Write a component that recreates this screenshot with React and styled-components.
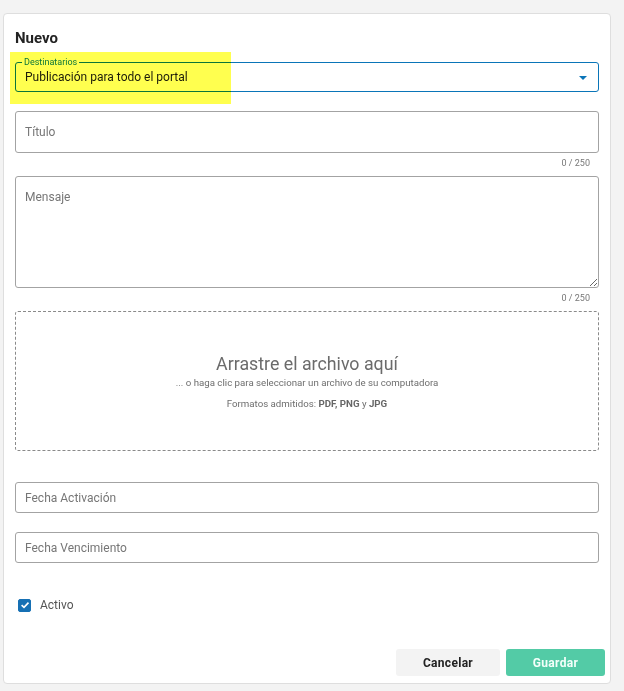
import React, { useState } from "react";
import styled, { createGlobalStyle } from "styled-components";

const GlobalStyle = createGlobalStyle`
  html, body {
    margin: 0;
    padding: 0;
    background: #f3f3f3;
    font-family: Roboto, "Liberation Sans", sans-serif;
  }
  * { box-sizing: border-box; }
`;

const Page = styled.div`
  padding: 13px 13px 8px 3px;
`;

const Card = styled.form`
  position: relative;
  width: 608px;
  background: #fff;
  border: 1px solid #dedede;
  border-radius: 4px;
  padding: 15px 11px 7px 11px;
  display: flex;
  flex-direction: column;
`;

const Title = styled.h2`
  margin: 0 0 15px 0;
  font-size: 15px;
  line-height: 18px;
  font-weight: 700;
  color: #222;
`;

// marcador amarillo sobre el campo de destinatarios
const Highlight = styled.div`
  position: absolute;
  left: 6px;
  top: 38px;
  width: 221px;
  height: 52px;
  background: #ffff4f;
  mix-blend-mode: multiply;
  pointer-events: none;
`;

const SelectBox = styled.div`
  position: relative;
  height: 30px;
  border: 1px solid #0a75b8;
  border-radius: 3px;
  display: flex;
  align-items: center;
  padding: 0 9px;
  font-size: 12px;
  color: #1c1c1c;
  cursor: pointer;
  margin-bottom: 19px;
`;

const FloatLabel = styled.span`
  position: absolute;
  left: 6px;
  top: -6px;
  padding: 0 2px;
  background: #fff;
  font-size: 9px;
  line-height: 10px;
  color: #0a75b8;
`;

const Caret = styled.span`
  margin-left: auto;
  margin-right: 2px;
  width: 0;
  height: 0;
  border-left: 4px solid transparent;
  border-right: 4px solid transparent;
  border-top: 4px solid #0a75b8;
  margin-top: 2px;
`;

const Field = styled.input`
  display: block;
  width: 100%;
  height: ${p => p.$h || 31}px;
  border: 1px solid #a3a3a3;
  border-radius: 3px;
  padding: 0 9px;
  font-family: inherit;
  font-size: 12px;
  color: #222;
  outline: none;
  margin-bottom: ${p => p.$mb || 0}px;
  &::placeholder { color: #767676; }
`;

const Area = styled.textarea`
  display: block;
  width: 100%;
  height: 112px;
  border: 1px solid #a3a3a3;
  border-radius: 3px;
  padding: 13px 9px;
  font-family: inherit;
  font-size: 12px;
  resize: vertical;
  outline: none;
  &::placeholder { color: #767676; }
`;

const Counter = styled.div`
  height: 23px;
  padding: 4px 9px 0 0;
  text-align: right;
  font-size: 9px;
  line-height: 12px;
  color: #777;
`;

const DropZone = styled.div`
  height: 140px;
  border: 1px dashed #8a8a8a;
  border-radius: 3px;
  display: flex;
  flex-direction: column;
  align-items: center;
  justify-content: center;
  color: #6e6e6e;
  cursor: pointer;
  margin-bottom: 31px;
`;

const DropTitle = styled.div`
  font-size: 17.8px;
  line-height: 22px;
  color: #6b6b6b;
`;

const DropHint = styled.div`
  font-size: 9.7px;
  line-height: 12px;
  margin-top: ${p => p.$mt}px;
  color: #6e6e6e;
  b { font-weight: 700; color: #666; }
`;

const CheckRow = styled.label`
  display: flex;
  align-items: center;
  gap: 9px;
  margin: 35px 0 0 3px;
  font-size: 12px;
  color: #555;
  height: 14px;
`;

const CheckBox = styled.span`
  width: 13px;
  height: 13px;
  border-radius: 2px;
  background: ${p => (p.$on ? "#1670b4" : "#fff")};
  border: 1px solid #1670b4;
  display: flex;
  align-items: center;
  justify-content: center;
`;

const Footer = styled.div`
  display: flex;
  justify-content: flex-end;
  gap: 6px;
  margin: 37px -6px 0 0;
`;

const Button = styled.button`
  width: ${p => p.$w}px;
  height: 27px;
  border: none;
  border-radius: 3px;
  font-family: inherit;
  font-size: 12px;
  font-weight: 700;
  letter-spacing: 0.3px;
  cursor: pointer;
  background: ${p => (p.$primary ? "#53cba6" : "#f3f3f3")};
  color: ${p => (p.$primary ? "#f4fffa" : "#222")};
`;

export default function App() {
  const [active, setActive] = useState(true);

  return (
    <Page>
      <GlobalStyle />
      <Card onSubmit={e => e.preventDefault()}>
        <Title>Nuevo</Title>
        <SelectBox>
          <FloatLabel>Destinatarios</FloatLabel>
          Publicación para todo el portal
          <Caret />
        </SelectBox>

        <Field $h={42} placeholder="Título" />
        <Counter>0 / 250</Counter>

        <Area placeholder="Mensaje" />
        <Counter>0 / 250</Counter>

        <DropZone>
          <DropTitle>Arrastre el archivo aquí</DropTitle>
          <DropHint $mt={2}>... o haga clic para seleccionar un archivo de su computadora</DropHint>
          <DropHint $mt={9}>
            Formatos admitidos: <b>PDF, PNG</b> y <b>JPG</b>
          </DropHint>
        </DropZone>

        <Field $mb={19} placeholder="Fecha Activación" />
        <Field placeholder="Fecha Vencimiento" />

        <CheckRow onClick={() => setActive(!active)}>
          <CheckBox $on={active}>
            {active && (
              <svg width="10" height="10" viewBox="0 0 10 10">
                <path d="M1.6 5.2 L4 7.4 L8.5 2.6" fill="none" stroke="#fff" strokeWidth="1.6" />
              </svg>
            )}
          </CheckBox>
          Activo
        </CheckRow>

        <Footer>
          <Button type="button" $w={104}>Cancelar</Button>
          <Button type="submit" $w={99} $primary>Guardar</Button>
        </Footer>

        <Highlight />
      </Card>
    </Page>
  );
}
